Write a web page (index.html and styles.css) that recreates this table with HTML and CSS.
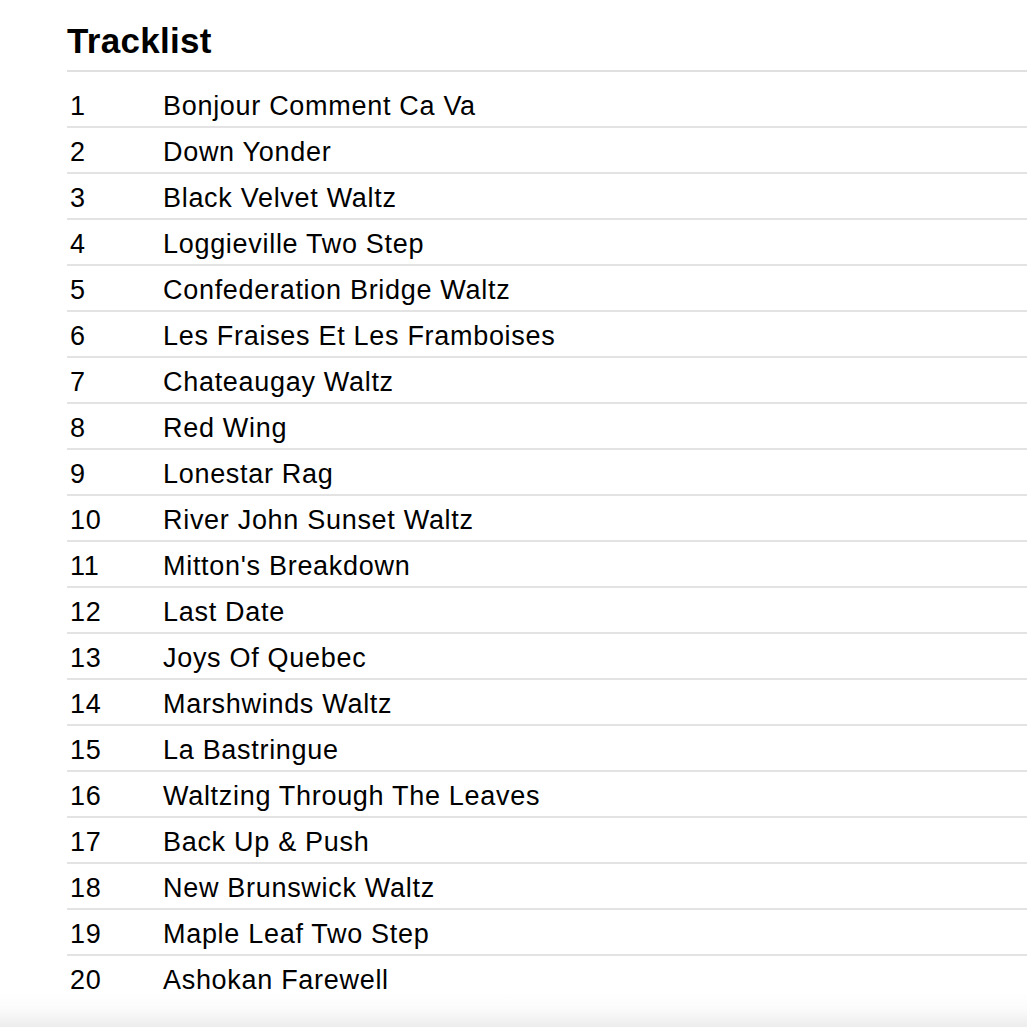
FILE: index.html
```html
<!DOCTYPE html>
<html>
<head>
    <link rel="stylesheet" href="styles.css">
</head>
<body>
    <div class="container">
        <h1 class="title">Tracklist</h1>
        <table class="tracks">
            <tr><td class="num">1</td><td>Bonjour Comment Ca Va</td></tr>
            <tr><td class="num">2</td><td>Down Yonder</td></tr>
            <tr><td class="num">3</td><td>Black Velvet Waltz</td></tr>
            <tr><td class="num">4</td><td>Loggieville Two Step</td></tr>
            <tr><td class="num">5</td><td>Confederation Bridge Waltz</td></tr>
            <tr><td class="num">6</td><td>Les Fraises Et Les Framboises</td></tr>
            <tr><td class="num">7</td><td>Chateaugay Waltz</td></tr>
            <tr><td class="num">8</td><td>Red Wing</td></tr>
            <tr><td class="num">9</td><td>Lonestar Rag</td></tr>
            <tr><td class="num">10</td><td>River John Sunset Waltz</td></tr>
            <tr><td class="num">11</td><td>Mitton's Breakdown</td></tr>
            <tr><td class="num">12</td><td>Last Date</td></tr>
            <tr><td class="num">13</td><td>Joys Of Quebec</td></tr>
            <tr><td class="num">14</td><td>Marshwinds Waltz</td></tr>
            <tr><td class="num">15</td><td>La Bastringue</td></tr>
            <tr><td class="num">16</td><td>Waltzing Through The Leaves</td></tr>
            <tr><td class="num">17</td><td>Back Up &amp; Push</td></tr>
            <tr><td class="num">18</td><td>New Brunswick Waltz</td></tr>
            <tr><td class="num">19</td><td>Maple Leaf Two Step</td></tr>
            <tr><td class="num">20</td><td>Ashokan Farewell</td></tr>
        </table>
    </div>
    <div class="bottom-fade"></div>
</body>
</html>
```

FILE: styles.css
```css
body {
    margin: 0;
    padding: 0;
    background: white;
    font-family: "Liberation Sans", Arial, sans-serif;
    color: #000;
    overflow: hidden;
}
.container {
    padding: 21px 0 0 67px;
}
.title {
    margin: 0;
    padding: 0 0 9px 0;
    font-size: 35px;
    line-height: 40px;
    font-weight: bold;
    letter-spacing: 0.3px;
    border-bottom: 2px solid #e0e0e0;
}
.tracks {
    width: 100%;
    margin-top: 10px;
    border-collapse: collapse;
    font-size: 27px;
    letter-spacing: 0.7px;
}
.tracks tr {
    border-bottom: 2px solid #e3e3e3;
}
.tracks tr:last-child {
    border-bottom: none;
}
.tracks td {
    padding: 4px 4px 0 0;
    line-height: 40px;
    white-space: nowrap;
}
.tracks .num {
    width: 89px;
    padding-left: 3px;
}
.bottom-fade {
    position: fixed;
    left: 0;
    right: 0;
    bottom: 0;
    height: 36px;
    background: linear-gradient(to bottom, rgba(255,255,255,0), #fbfbfb 50%, #ececec);
}
```
